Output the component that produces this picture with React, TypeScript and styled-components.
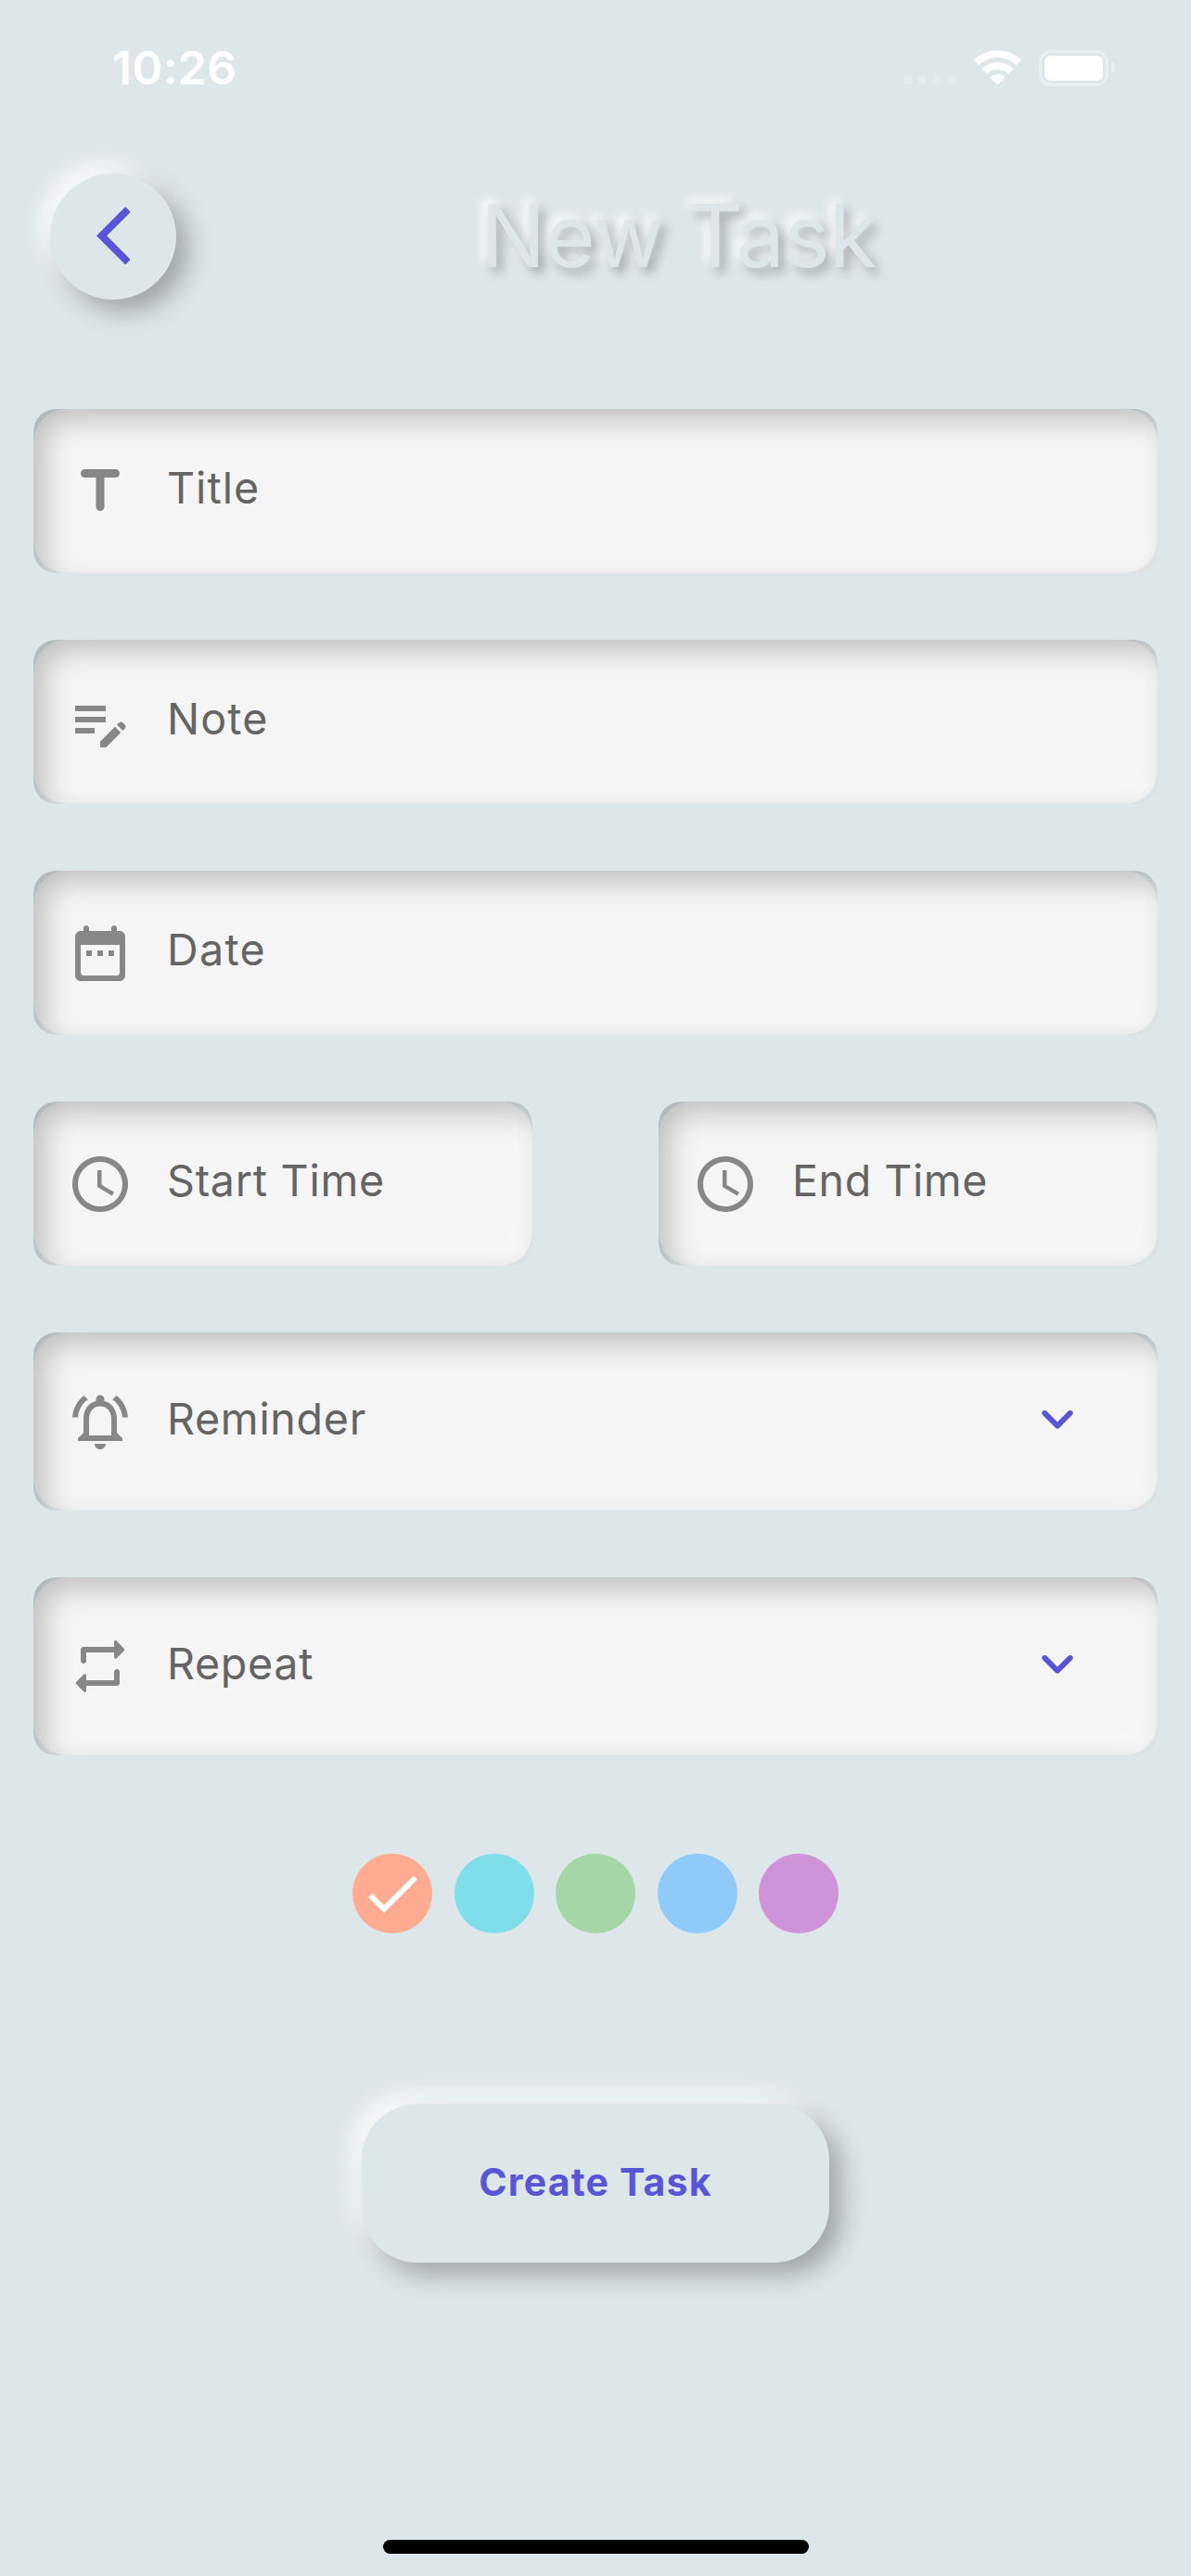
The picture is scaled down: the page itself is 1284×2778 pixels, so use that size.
import React, { useState } from "react";
import styled, { createGlobalStyle } from "styled-components";

const colors = {
  page: "#dde6e9",
  field: "#f5f5f5",
  accent: "#5856d6",
  icon: "#878787",
  label: "#646464",
};

const GlobalStyle = createGlobalStyle`
  body {
    margin: 0;
    background: ${colors.page};
    font-family: Inter, "Liberation Sans", sans-serif;
  }
  *, *::before, *::after {
    box-sizing: border-box;
  }
  button {
    border: none;
    padding: 0;
    font: inherit;
    color: inherit;
  }
`;

const Screen = styled.div`
  display: flex;
  flex-direction: column;
  width: 1284px;
  height: 2778px;
  padding-bottom: 24px;
  overflow: hidden;
  background: ${colors.page};
`;

const StatusBar = styled.div`
  display: flex;
  align-items: center;
  justify-content: space-between;
  height: 146px;
  padding: 0 82px 0 121px;
`;

const Clock = styled.span`
  font-size: 50px;
  font-weight: 600;
  line-height: 60px;
  letter-spacing: 0.25px;
  color: #fff;
`;

const StatusIcons = styled.div`
  display: flex;
  align-items: center;
`;

const SignalDots = styled.div`
  display: flex;
  gap: 6px;
  margin-top: 26px;
`;

const SignalDot = styled.i`
  width: 10px;
  height: 10px;
  border-radius: 4px;
  background: rgba(255, 255, 255, 0.2);
`;

const WifiGlyph = styled.svg`
  width: 51px;
  height: 38px;
  margin: 0 19px 0 19px;
`;

const Battery = styled.div`
  display: flex;
  align-items: center;
  gap: 3px;
`;

const BatteryShell = styled.div`
  width: 75px;
  height: 39px;
  padding: 3px;
  border: 3px solid rgba(255, 255, 255, 0.4);
  border-radius: 13px;
`;

const BatteryLevel = styled.div`
  height: 100%;
  border-radius: 7px;
  background: #fff;
`;

const BatteryCap = styled.div`
  width: 4px;
  height: 12px;
  border-radius: 0 4px 4px 0 / 0 6px 6px 0;
  background: rgba(255, 255, 255, 0.45);
`;

const Header = styled.header`
  display: flex;
  align-items: center;
  gap: 328px;
  height: 136px;
  margin-top: 41px;
  padding-left: 54px;
`;

const raised = `
  background: ${colors.page};
  box-shadow: 12px 12px 28px rgba(0, 0, 0, 0.3), -10px -10px 24px #fff;
`;

const BackButton = styled.button`
  display: flex;
  align-items: center;
  justify-content: center;
  width: 136px;
  height: 136px;
  border-radius: 50%;
  ${raised}
`;

const BackGlyph = styled.svg`
  width: 36.8px;
  height: 62.6px;
  margin-top: -2px;
  fill: ${colors.accent};
`;

const Heading = styled.h1`
  margin: 0;
  padding-bottom: 2px;
  font-size: 93px;
  font-weight: 400;
  line-height: 112px;
  letter-spacing: -0.48px;
  white-space: nowrap;
  color: ${colors.page};
  text-shadow: 6px 6px 12px rgba(0, 0, 0, 0.28), -6px -6px 12px #fff;
`;

const Form = styled.form`
  display: flex;
  flex-direction: column;
  gap: 72px;
  margin: 118px 36px 0;
`;

const FieldPair = styled.div`
  display: grid;
  grid-template-columns: 1fr 1fr;
  gap: 136px;
`;

const FieldFrame = styled.label<{ $height: number }>`
  position: relative;
  display: block;
  height: ${(p) => p.$height}px;
  border-radius: 24px;
  overflow: hidden;

  &::after {
    content: "";
    position: absolute;
    inset: 0;
    border-radius: 24px;
    pointer-events: none;
    box-shadow: inset 12px 12px 31px rgba(0, 0, 0, 0.22),
      inset -12px -12px 31px rgba(255, 255, 255, 0.3);
  }
`;

const FieldFill = styled.div`
  display: flex;
  align-items: center;
  height: 100%;
  padding: 0 72px 0 36px;
  border-radius: 36px;
  background: ${colors.field};
`;

const Glyph = styled.svg<{ $tone: string }>`
  flex: none;
  width: 72px;
  height: 72px;
  fill: ${(p) => p.$tone};
`;

const LabelText = styled.span<{ $tracking: number }>`
  flex: 1;
  margin-left: 36px;
  padding-bottom: 7px;
  font-size: 46.6px;
  line-height: 56px;
  letter-spacing: ${(p) => p.$tracking}px;
  white-space: nowrap;
  color: ${colors.label};
`;

const DropdownGlyph = styled(Glyph)`
  margin-bottom: 6px;
`;

const Palette = styled.div`
  display: flex;
  justify-content: center;
  gap: 23.5px;
  margin-top: 106px;
`;

const Swatch = styled.button<{ $color: string }>`
  display: flex;
  align-items: center;
  justify-content: center;
  width: 86px;
  height: 86px;
  border-radius: 50%;
  background: ${(p) => p.$color};
`;

const CreateButton = styled.button`
  align-self: center;
  width: 504px;
  height: 171px;
  margin-top: 184px;
  padding-bottom: 4px;
  border-radius: 60px;
  font-size: 41px;
  font-weight: 700;
  letter-spacing: 1.2px;
  color: ${colors.accent};
  ${raised}
`;

const HomeIndicator = styled.div`
  align-self: center;
  width: 459px;
  height: 15px;
  margin-top: auto;
  border-radius: 8px;
  background: #000;
`;

const paths = {
  title:
    "M5 5.5C5 6.33 5.67 7 6.5 7h4v10.5c0 .83.67 1.5 1.5 1.5s1.5-.67 1.5-1.5V7h4c.83 0 1.5-.67 1.5-1.5S18.33 4 17.5 4h-11C5.67 4 5 4.67 5 5.5z",
  note:
    "M3 10h11v2H3v-2zm0-2h11V6H3v2zm0 8h7v-2H3v2zm15.01-3.13.71-.71c.39-.39 1.02-.39 1.41 0l.71.71c.39.39.39 1.02 0 1.41l-.71.71-2.12-2.12zm-.71.71-5.3 5.3V21h2.12l5.3-5.3-2.12-2.12z",
  date:
    "M9 11H7v2h2v-2zm4 0h-2v2h2v-2zm4 0h-2v2h2v-2zM19 4h-1V3c0-.55-.45-1-1-1s-1 .45-1 1v1H8V3c0-.55-.45-1-1-1s-1 .45-1 1v1H5c-1.1 0-2 .9-2 2v14c0 1.1.9 2 2 2h14c1.1 0 2-.9 2-2V6c0-1.1-.9-2-2-2zm-1 16H6c-.55 0-1-.45-1-1V9h14v10c0 .55-.45 1-1 1z",
  time:
    "M11.99 2C6.47 2 2 6.48 2 12s4.47 10 9.99 10C17.52 22 22 17.52 22 12S17.52 2 11.99 2zM12 20c-4.42 0-8-3.58-8-8s3.58-8 8-8 8 3.58 8 8-3.58 8-8 8zm.5-13H11v6l5.25 3.15.75-1.23-4.5-2.67V7z",
  reminder:
    "M12 22c1.1 0 2-.9 2-2h-4c0 1.1.9 2 2 2zm6-6v-5c0-3.07-1.63-5.64-4.5-6.32V4c0-.83-.67-1.5-1.5-1.5s-1.5.67-1.5 1.5v.68C7.64 5.36 6 7.92 6 11v5l-2 2v1h16v-1l-2-2zm-2 1H8v-6c0-2.48 1.51-4.5 4-4.5s4 2.02 4 4.5v6zM7.58 4.08 6.15 2.65C3.75 4.48 2.17 7.3 2.03 10.5h2c.15-2.65 1.51-4.97 3.55-6.42zm12.39 6.42h2c-.15-3.2-1.73-6.02-4.12-7.85l-1.42 1.43c2.02 1.45 3.39 3.77 3.54 6.42z",
  repeat:
    "M7 7h10v1.79c0 .45.54.67.85.35l2.79-2.79c.2-.2.2-.51 0-.71l-2.79-2.79c-.31-.31-.85-.09-.85.36V5H6c-.55 0-1 .45-1 1v4c0 .55.45 1 1 1s1-.45 1-1V7zm10 10H7v-1.79c0-.45-.54-.67-.85-.35l-2.79 2.79c-.2.2-.2.51 0 .71l2.79 2.79c.31.31.85.09.85-.36V19h11c.55 0 1-.45 1-1v-4c0-.55-.45-1-1-1s-1 .45-1 1v3z",
  chevron:
    "M8.12 9.29 12 13.17l3.88-3.88c.39-.39 1.02-.39 1.41 0 .39.39.39 1.02 0 1.41l-4.59 4.59c-.39.39-1.02.39-1.41 0L6.7 10.7c-.39-.39-.39-1.02 0-1.41.39-.38 1.03-.39 1.42 0z",
  check: "M9 16.17 4.83 12l-1.42 1.41L9 19 21 7l-1.41-1.41L9 16.17z",
};

type FieldProps = {
  icon: keyof typeof paths;
  text: string;
  tracking: number;
  dropdown?: boolean;
};

function Field({ icon, text, tracking, dropdown = false }: FieldProps) {
  return (
    <FieldFrame $height={dropdown ? 192 : 177}>
      <FieldFill>
        <Glyph viewBox="0 0 24 24" $tone={colors.icon}>
          <path d={paths[icon]} />
        </Glyph>
        <LabelText $tracking={tracking}>{text}</LabelText>
        {dropdown && (
          <DropdownGlyph viewBox="0 0 24 24" $tone={colors.accent}>
            <path d={paths.chevron} />
          </DropdownGlyph>
        )}
      </FieldFill>
    </FieldFrame>
  );
}

const swatches = ["#ffab91", "#80deea", "#a5d6a7", "#90caf9", "#ce93d8"];

export default function App() {
  const [selected, setSelected] = useState(0);

  return (
    <>
      <GlobalStyle />
      <Screen>
        <StatusBar>
          <Clock>10:26</Clock>
          <StatusIcons>
            <SignalDots>
              <SignalDot />
              <SignalDot />
              <SignalDot />
              <SignalDot />
            </SignalDots>
            <WifiGlyph viewBox="0 0 51 38" fill="#fff">
              <path d="M25.5.3C35.2.3 44 4 50.3 10.2c.5.5.5 1 0 1.5l-3.9 3.9c-.5.5-1 .5-1.5 0C39.8 10.9 33 8 25.5 8S11.2 10.9 6.1 15.600c-.5.5-1 .5-1.500 0L.7 11.700c-.5-.5-.5-1 0-1.500C7 4 15.800.3 25.500.3z" />
              <path d="M25.500 13.200c6.200 0 11.800 2.400 16 6.300.5.5.5 1 0 1.500l-3.900 3.900c-.5.5-1 .5-1.500 0-2.800-2.500-6.500-4-10.600-4s-7.800 1.500-10.600 4c-.5.5-1 .5-1.500 0L9.500 21c-.5-.5-.5-1 0-1.500 4.200-3.900 9.800-6.300 16-6.300z" />
              <path d="M25.500 26.100c2.800 0 5.300 1 7.300 2.700.5.5.5 1 0 1.500l-6.500 6.500c-.5.5-1.100.5-1.600 0l-6.500-6.500c-.5-.5-.5-1 0-1.500 2-1.700 4.500-2.700 7.300-2.700z" />
            </WifiGlyph>
            <Battery>
              <BatteryShell>
                <BatteryLevel />
              </BatteryShell>
              <BatteryCap />
            </Battery>
          </StatusIcons>
        </StatusBar>

        <Header>
          <BackButton type="button" aria-label="Back">
            <BackGlyph viewBox="0 2.1 11.67 19.8">
              <path d="M11.67 3.87 9.9 2.1 0 12l9.9 9.9 1.77-1.77L3.54 12z" />
            </BackGlyph>
          </BackButton>
          <Heading>New Task</Heading>
        </Header>

        <Form>
          <Field icon="title" text="Title" tracking={1.03} />
          <Field icon="note" text="Note" tracking={1.1} />
          <Field icon="date" text="Date" tracking={1.3} />
          <FieldPair>
            <Field icon="time" text="Start Time" tracking={0.74} />
            <Field icon="time" text="End Time" tracking={0.55} />
          </FieldPair>
          <Field icon="reminder" text="Reminder" tracking={0.7} dropdown />
          <Field icon="repeat" text="Repeat" tracking={0.68} dropdown />
        </Form>

        <Palette>
          {swatches.map((color, i) => (
            <Swatch
              key={color}
              type="button"
              $color={color}
              onClick={() => setSelected(i)}
            >
              {selected === i && (
                <Glyph viewBox="0 0 24 24" $tone="#fff">
                  <path d={paths.check} />
                </Glyph>
              )}
            </Swatch>
          ))}
        </Palette>

        <CreateButton type="button">Create Task</CreateButton>
        <HomeIndicator />
      </Screen>
    </>
  );
}
